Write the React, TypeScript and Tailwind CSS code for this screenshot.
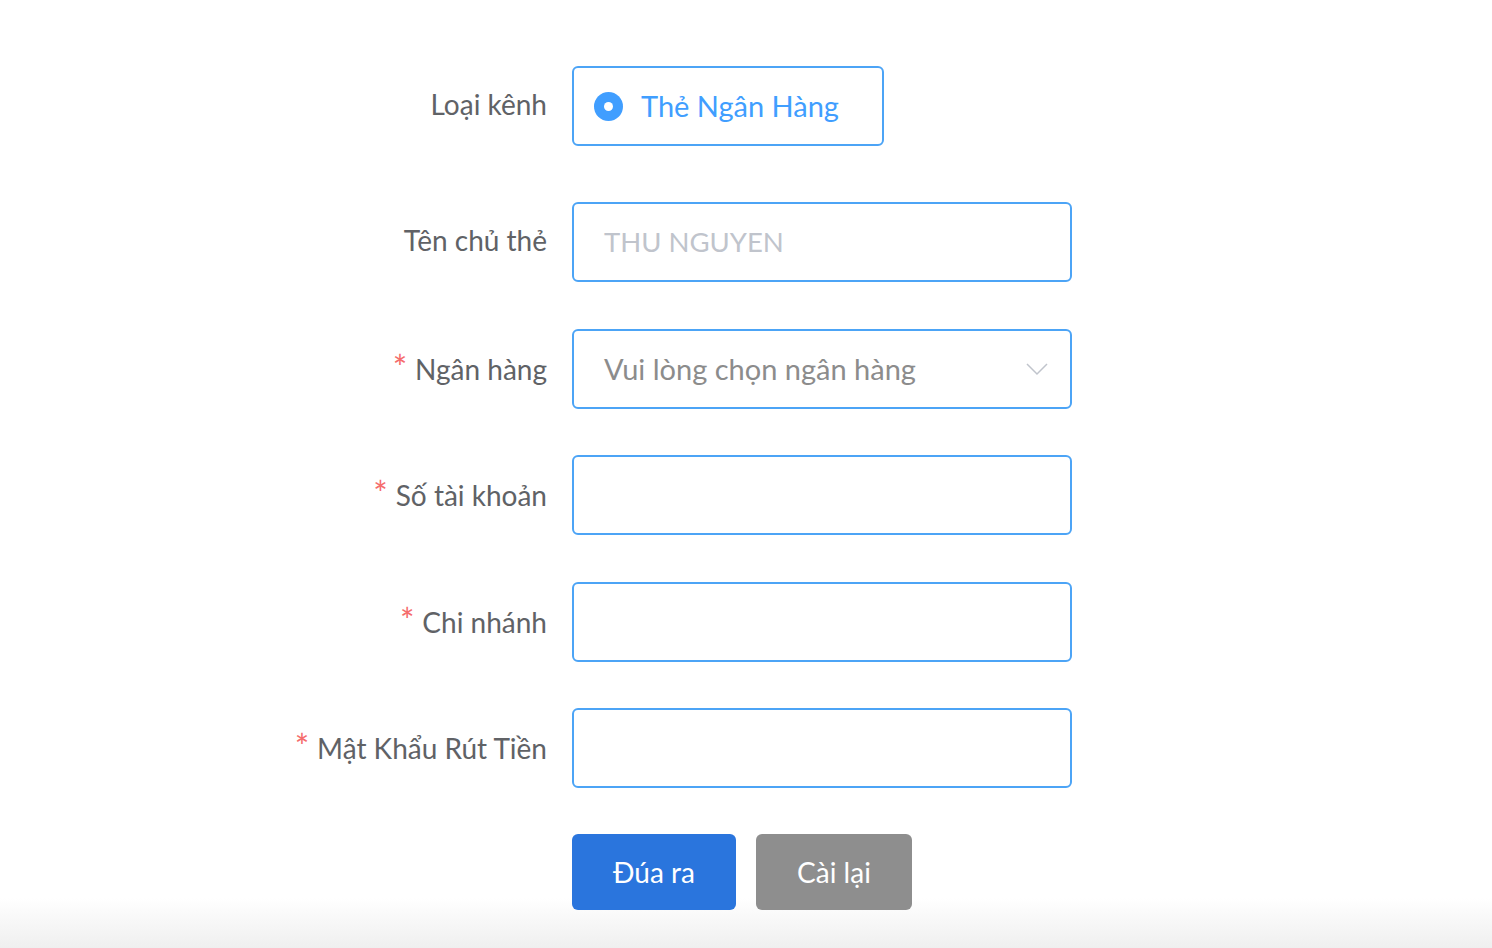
import React from 'react'

const font = { fontFamily: 'Lato, "Noto Sans", sans-serif' }

function Row({ label, required, children, className = '' }: { label: string; required?: boolean; children: React.ReactNode; className?: string }) {
  return (
    <div className={`flex items-center ${className}`}>
      <div className="w-[547px] shrink-0 text-right text-[28px] text-[#606266] leading-none -mt-[4px]">
        {required && <span className="mr-[8px] text-[34px] leading-none text-[#f56c6c]">*</span>}
        {label}
      </div>
      <div className="ml-[25px]">{children}</div>
    </div>
  )
}

function TextBox({ placeholder }: { placeholder?: string }) {
  return (
    <div className="flex h-[80px] w-[500px] items-center rounded-[6px] border-2 border-[#4ca4f6] px-[30px] text-[27.5px] text-[#c0c4cc]">
      {placeholder}
    </div>
  )
}

export default function App() {
  return (
    <div className="relative h-[948px] w-full bg-white" style={font}>
      <div className="absolute bottom-0 left-0 h-[50px] w-full bg-gradient-to-b from-white to-[#efefef]" />
      <div className="relative flex flex-col pt-[66px]">
        <Row label="Loại kênh">
          <div className="flex h-[80px] w-[312px] items-center rounded-[6px] border-2 border-[#4ca4f6] pl-[20px]">
            <span className="flex h-[29px] w-[29px] items-center justify-center rounded-full bg-[#409eff]">
              <span className="h-[9px] w-[9px] rounded-full bg-white" />
            </span>
            <span className="ml-[18px] text-[29px] text-[#409eff]">Thẻ Ngân Hàng</span>
          </div>
        </Row>

        <Row label="Tên chủ thẻ" className="mt-[56px]">
          <TextBox placeholder="THU NGUYEN" />
        </Row>

        <Row label="Ngân hàng" required className="mt-[47px]">
          <div className="flex h-[80px] w-[500px] items-center justify-between rounded-[6px] border-2 border-[#4ca4f6] pl-[30px] pr-[22px] text-[29px] text-[#8c8c8c]">
            <span>Vui lòng chọn ngân hàng</span>
            <svg width="22" height="14" viewBox="0 0 22 14" fill="none">
              <path d="M1 2l10 10L21 2" stroke="#c0c4cc" strokeWidth="1.5" />
            </svg>
          </div>
        </Row>

        <Row label="Số tài khoản" required className="mt-[46px]">
          <TextBox />
        </Row>

        <Row label="Chi nhánh" required className="mt-[47px]">
          <TextBox />
        </Row>

        <Row label="Mật Khẩu Rút Tiền" required className="mt-[46px]">
          <TextBox />
        </Row>

        <div className="mt-[46px] flex gap-[20px] pl-[572px]">
          <button className="h-[76px] w-[164px] rounded-[6px] bg-[#2a75dd] text-[28px] text-white">Đúa ra</button>
          <button className="h-[76px] w-[156px] rounded-[6px] bg-[#8e8e8e] text-[28px] text-white">Cài lại</button>
        </div>
      </div>
    </div>
  )
}
